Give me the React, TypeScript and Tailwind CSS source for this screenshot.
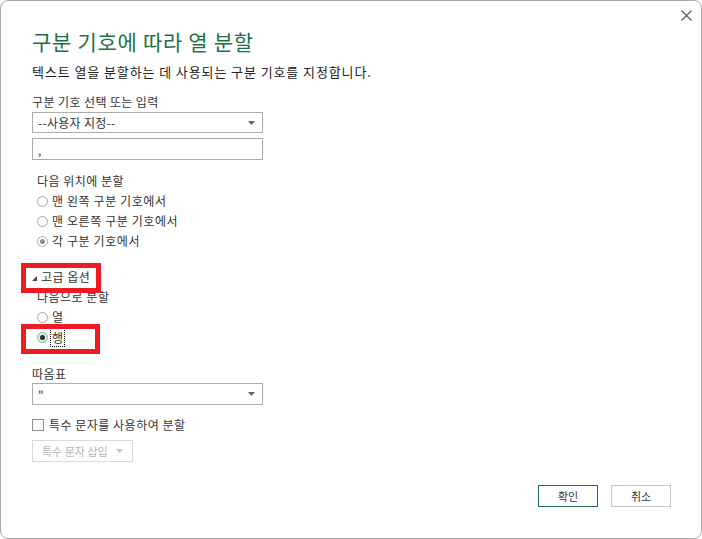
import React from "react";

const font = "font-['Noto_Sans_CJK_KR','Noto_Sans',sans-serif]";

function Caret({ color = "#666" }: { color?: string }) {
  return (
    <svg width="7" height="4" viewBox="0 0 7 4" className="block">
      <polygon points="0,0 7,0 3.5,4" fill={color} />
    </svg>
  );
}

function Radio({ state }: { state: "off" | "gray" | "focus" }) {
  if (state === "off")
    return <span className="block w-[11px] h-[11px] rounded-full border border-[#a6a6a6] bg-white" />;
  if (state === "gray")
    return (
      <span className="flex items-center justify-center w-[11px] h-[11px] rounded-full border border-[#a6a6a6] bg-white">
        <span className="block w-[5px] h-[5px] rounded-full bg-[#8c8c8c]" />
      </span>
    );
  return (
    <span className="flex items-center justify-center w-[11px] h-[11px] rounded-full border border-[#7fb798] bg-[#dcefe3]">
      <span className="block w-[5px] h-[5px] rounded-full bg-[#2b2b2b]" />
    </span>
  );
}

function RadioRow({ state, children }: { state: "off" | "gray" | "focus"; children: React.ReactNode }) {
  return (
    <div className="flex items-center h-[20px] pl-[5px]">
      <Radio state={state} />
      <span className="ml-[4px] text-[12px] leading-[20px] tracking-[0.6px] text-[#333]">{children}</span>
    </div>
  );
}

export default function App() {
  return (
    <div
      className={`relative w-[702px] h-[539px] bg-white border border-[#a9a9a9] rounded-[8px] overflow-hidden ${font}`}
    >
      {/* close */}
      <button className="absolute left-[679px] top-[8px] w-[12px] h-[12px] flex items-center justify-center">
        <svg width="11" height="11" viewBox="0 0 11 11">
          <path d="M0.5 0.5 L10.5 10.5 M10.5 0.5 L0.5 10.5" stroke="#555" strokeWidth="1.1" />
        </svg>
      </button>

      <div className="flex flex-col pl-[31px] pt-[28px]">
        <div className="h-[24px] leading-[24px] text-[21px] tracking-[0.7px] text-[#1e7145]">
          구분 기호에 따라 열 분할
        </div>
        <div className="mt-[10px] h-[18px] leading-[18px] text-[13px] tracking-[0.9px] text-[#222]">
          텍스트 열을 분할하는 데 사용되는 구분 기호를 지정합니다.
        </div>
        <div className="mt-[13px] h-[16px] leading-[16px] text-[12px] tracking-[0.4px] text-[#333]">
          구분 기호 선택 또는 입력
        </div>
        <div className="mt-[2px] w-[231px] h-[21px] border border-[#acacac] flex items-center justify-between pl-[5px] pr-[7px]">
          <span className="text-[12px] leading-[19px] tracking-[0.3px] text-[#333]">--사용자 지정--</span>
          <Caret />
        </div>
        <div className="mt-[5px] w-[231px] h-[22px] border border-[#acacac] flex items-center pl-[5px]">
          <span className="text-[12px] leading-[19px] text-[#333]">,</span>
        </div>

        <div className="mt-[11px] h-[20px] leading-[20px] pl-[5px] text-[12px] tracking-[0.5px] text-[#333]">
          다음 위치에 분할
        </div>
        <RadioRow state="off">맨 왼쪽 구분 기호에서</RadioRow>
        <RadioRow state="off">맨 오른쪽 구분 기호에서</RadioRow>
        <RadioRow state="gray">각 구분 기호에서</RadioRow>

        <div className="mt-[16px] h-[20px] flex items-center">
          <svg width="5" height="5" viewBox="0 0 5 5" className="block mt-[3px]">
            <polygon points="5,0 5,5 0,5" fill="#444" />
          </svg>
          <span className="ml-[4px] text-[12px] leading-[20px] tracking-[0.5px] text-[#333]">고급 옵션</span>
        </div>
        <div className="h-[20px] leading-[20px] pl-[5px] text-[12px] tracking-[0.5px] text-[#333]">다음으로 분할</div>
        <RadioRow state="off">열</RadioRow>
        <div className="flex items-center h-[20px] pl-[5px]">
          <Radio state="focus" />
          <span className="ml-[2px] px-[1px] h-[19px] border border-dotted border-black text-[12px] leading-[17px] text-[#333]">
            행
          </span>
        </div>

        <div className="mt-[17px] h-[19px] leading-[19px] text-[12px] tracking-[0.5px] text-[#333]">따옴표</div>
        <div className="w-[231px] h-[22px] border border-[#acacac] flex items-center justify-between pl-[5px] pr-[7px]">
          <span className="text-[12px] leading-[19px] text-[#333]">"</span>
          <Caret />
        </div>

        <div className="mt-[10px] h-[20px] flex items-center">
          <span className="block w-[12px] h-[12px] border border-[#8f8f8f] bg-white" />
          <span className="ml-[5px] text-[12px] leading-[20px] tracking-[0.5px] text-[#333]">
            특수 문자를 사용하여 분할
          </span>
        </div>
        <div className="mt-[5px] w-[101px] h-[22px] border border-[#d9d9d9] flex items-center pl-[9px] gap-[8px]">
          <span className="text-[11px] leading-[20px] text-[#b4b4b4]">특수 문자 삽입</span>
          <Caret color="#c4c4c4" />
        </div>

        <div className="mt-[23px] flex justify-end gap-[13px] pr-[30px]">
          <button className="w-[60px] h-[22px] border border-[#217346] bg-white text-[11px] leading-[20px] text-[#333]">
            확인
          </button>
          <button className="w-[60px] h-[22px] border border-[#c6c6c6] bg-white text-[11px] leading-[20px] text-[#333]">
            취소
          </button>
        </div>
      </div>

      {/* annotation boxes */}
      <div className="absolute left-[20px] top-[262px] w-[80px] h-[30px] border-[5px] border-[#ed1c24] pointer-events-none" />
      <div className="absolute left-[20px] top-[323px] w-[79px] h-[30px] border-[5px] border-[#ed1c24] pointer-events-none" />
    </div>
  );
}
